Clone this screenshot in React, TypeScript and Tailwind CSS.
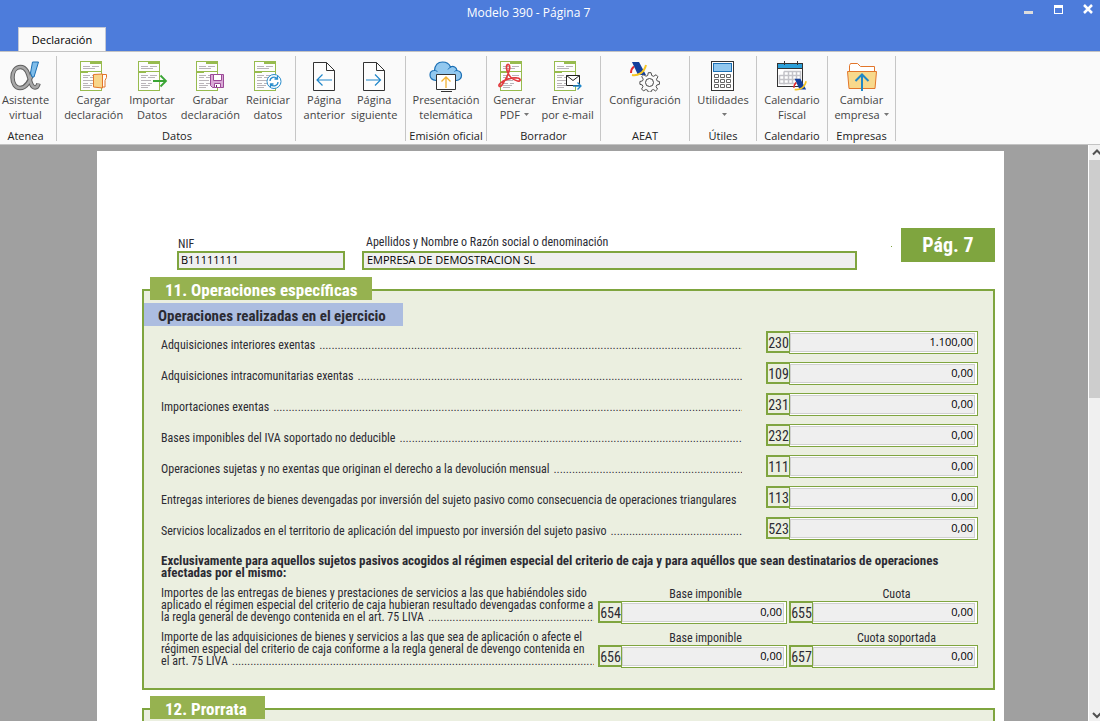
import type { ReactNode } from 'react';

type Tool = { lines: string[]; icon: ReactNode; arrow?: boolean };
type Group = { name: string; width: string; tools: Tool[] };

function Doc({ children }: { children?: ReactNode }) {
  return (
    <svg width="28" height="31" viewBox="0 0 28 31" fill="none" className="overflow-visible">
      <rect x="0.5" y="0.5" width="21" height="29" fill="#fdfdfd" stroke="#97bb4e" />
      <path d="M10 0h12v3H10zM0 10h22v1H0zM0 10h8v2H0z" fill="#97bb4e" />
      <path d="M3 5.5h7M12 5.5h7M3 7.5h12M3 14.5h7M12 14.5h7M3 16.5h5M10 16.5h7M3 19.5h10M3 22.5h5M10 22.5h4M3 24.5h9M3 26.5h7" stroke="#b9b4b9" />
      {children}
    </svg>
  );
}

function AlphaIcon() {
  const curve = 'M28.500 22.500c-1 5-5.500 5.500-7.500 0C19 17 18 6 10.500 6 5.500 6 2.500 10.500 2.500 16.500s3 10.500 7.500 10.500c7 0 10-7.500 12.500-15.500';
  return (
    <svg width="32" height="31" viewBox="0 0 32 31" fill="none" className="overflow-visible">
      <path d={curve} stroke="#606060" strokeWidth="4.500" />
      <path d={curve} stroke="#a8a8a8" strokeWidth="2.500" />
      <path d="M22.500 1h6l-4.500 15h-2l-1.500-4z" fill="#7fbdea" stroke="#1d70b4" />
    </svg>
  );
}

const loadIcon = (
  <Doc>
    <path d="M22 13.500h4.500v3l-1.500 3v6.500h-3" fill="#fdfdfd" stroke="#e2762b" />
    <path d="M13.500 13.500l9-.5v14l-9-1z" fill="#f8d58a" stroke="#e2762b" />
  </Doc>
);

const importIcon = (
  <Doc>
    <path d="M15 20h12.500M22.500 14.500l5.500 5.500-5.500 5.500" stroke="#3aa535" strokeWidth="1.800" />
  </Doc>
);

const saveIcon = (
  <Doc>
    <path d="M14.500 13.500h13v13h-11l-2-2z" fill="#d9a9d6" stroke="#9b4a97" />
    <path d="M17.500 13.500h8v6h-8zM18.500 22.500h6v4h-6z" fill="#fff" stroke="#9b4a97" />
    <path d="M20 24h1v2h-1z" fill="#5b2a58" />
  </Doc>
);

const resetIcon = (
  <Doc>
    <circle cx="20" cy="20.500" r="7" fill="#fff" stroke="#2a8dcc" />
    <path d="M16 20a4 4 0 0 1 7-2.500M24 21a4 4 0 0 1-7 2.500M23.500 15v3h-3M16.500 26v-3h3" stroke="#2a8dcc" strokeWidth="1.300" />
  </Doc>
);

function PageIcon({ back }: { back?: boolean }) {
  return (
    <svg width="24" height="31" viewBox="0 0 24 31" fill="none">
      <path d="M1.500 1.500h13l8 8v20h-21z" fill="#fdfdfd" stroke="#333" />
      <path d="M14.500 1.500v8h8" stroke="#333" />
      <path d={back ? 'M5 19h15M10.500 13.500L5 19l5.500 5.500' : 'M4 19h14.500M13 13.500l5.500 5.500-5.500 5.500'} stroke="#1f86c9" strokeWidth="1.200" />
    </svg>
  );
}

const cloudIcon = (
  <svg width="34" height="32" viewBox="0 0 34 32" fill="none">
    <path d="M7 19.500C3 19 1 17 1 14c0-3 2-4.500 4.500-4.500C6 4 9 1 13.500 1c4.500 0 7 2.500 8 5 3-1.500 6 .5 6.500 3.500 3 .5 4.500 2.500 4.500 5s-2 5-5 5z" fill="#92c8ef" stroke="#1c70b5" strokeWidth="1.200" />
    <path d="M22 6c-1.500.500-2.500 1.500-3 2.500M28 9.500c-1 0-2 .3-2.500 1M5.500 9.500c1.500 0 2.500.5 3 1.500" stroke="#1c70b5" />
    <path d="M7.500 13.500h19v15h-19zM12 30.500h11" fill="#fff" stroke="#333" />
    <path d="M17 27V16M12.500 20.500L17 16l4.500 4.500" stroke="#f2b233" strokeWidth="1.300" />
  </svg>
);

const pdfIcon = (
  <Doc>
    <path d="M8.500 3.500c-2-.5-2.500 2.500-1.500 6 1.500 5.500 6 9.500 10.500 10.500 3.500.7 3.500-2.500 0-3C11 16.300 3.500 19 0 22.500c-2.500 2.500 0 4.500 2 1.500C5 20 8.500 13 9.500 8c.5-2.500.3-4-1-4.500z" stroke="#e23b3f" strokeWidth="1.700" />
  </Doc>
);

const mailIcon = (
  <Doc>
    <path d="M12.500 14.500h13v10h-13z" fill="#fff" stroke="#222" />
    <path d="M12.500 14.500l6.500 5 6.500-5" stroke="#222" />
    <path d="M19 25h8M23.500 21.500l3.500 3.500-3.500 3.500" stroke="#1f86c9" strokeWidth="1.300" />
  </Doc>
);

function AgencyMark() {
  return (
    <>
      <path d="M2 1h7l7 13H8z" fill="#123f9c" />
      <path d="M1 12c0-3 1-5 3-6.500" stroke="#e02a2f" strokeWidth="2" />
      <path d="M2 14c6 1 12-2 14-10" stroke="#f6c623" strokeWidth="2" />
    </>
  );
}

const configIcon = (
  <svg width="30" height="31" viewBox="0 0 30 31" fill="none">
    <AgencyMark />
    <path d="M17.500 11.500h3l.7 3 2 .9 2.700-1.700 2 2.200-1.600 2.600.8 1.900 2.400.6v3l-2.800.7-.8 1.900 1.600 2.500-2.100 2-2.500-1.500-1.900.8-.6 2h-2.900l-.7-2-1.900-.8-2.600 1.500-2-2.100 1.500-2.500-.8-1.900-2.500-.6v-3l2.800-.7.8-1.900-1.600-2.600 2.100-2.100 2.500 1.600 1.800-.8z" fill="#fafafa" stroke="#444" transform="translate(2 1) scale(.93)" />
    <circle cx="19.500" cy="21.500" r="4" stroke="#444" />
  </svg>
);

const calcIcon = (
  <svg width="24" height="31" viewBox="0 0 24 31" fill="none">
    <rect x="0.500" y="0.500" width="22" height="29" fill="#fff" stroke="#333" />
    <rect x="2.500" y="2.500" width="18" height="8" fill="#92c8ef" stroke="#1c70b5" />
    <path d="M3.500 13.500h4v3h-4zM9.500 13.500h4v3h-4zM15.500 13.500h4v3h-4zM3.500 18.500h4v3h-4zM9.500 18.500h4v3h-4zM15.500 18.500h4v3h-4zM3.500 23.500h4v3h-4zM9.500 23.500h4v3h-4zM15.500 23.500h4v3h-4z" stroke="#666" />
  </svg>
);

const calendarIcon = (
  <svg width="30" height="31" viewBox="0 0 30 31" fill="none">
    <rect x="0.500" y="2.500" width="25" height="23" fill="#fff" stroke="#333" />
    <path d="M1 3h24v4H1z" fill="#2a9fd8" />
    <path d="M1 7.500h24M7.500 0v4M20.500 0v4" stroke="#333" />
    <path d="M7 10.500h16.500v9M7 10.500v13M2.500 14.500h21M2.500 18.500h21M2.500 22.500h15M2.500 14v9M11.500 10.500v12.500M15.500 10.500v12.500M19.500 10.500v9" stroke="#c3c3c8" strokeWidth="1.500" />
    <g transform="translate(16 17) scale(.82)">
      <AgencyMark />
    </g>
  </svg>
);

const companyIcon = (
  <svg width="30" height="31" viewBox="0 0 30 31" fill="none">
    <path d="M2.500 11V4.500l1-2h7l3 3h14V11" fill="#fff" stroke="#e2762b" />
    <path d="M.500 10.500h29l-1.500 17H2z" fill="#f8d98c" stroke="#e2762b" />
    <path d="M15 30V14M8.500 20L15 13.500l6.500 6.500" stroke="#2188c6" strokeWidth="2" />
  </svg>
);

const groups: Group[] = [
  { name: 'Atenea', width: 'w-[57px] pr-[5px]', tools: [{ lines: ['Asistente', 'virtual'], icon: <AlphaIcon /> }] },
  {
    name: 'Datos',
    width: 'w-[239px] pl-[2px]',
    tools: [
      { lines: ['Cargar', 'declaración'], icon: loadIcon },
      { lines: ['Importar', 'Datos'], icon: importIcon },
      { lines: ['Grabar', 'declaración'], icon: saveIcon },
      { lines: ['Reiniciar', 'datos'], icon: resetIcon },
    ],
  },
  {
    name: '',
    width: 'w-[110px]',
    tools: [
      { lines: ['Página', 'anterior'], icon: <PageIcon back /> },
      { lines: ['Página', 'siguiente'], icon: <PageIcon /> },
    ],
  },
  { name: 'Emisión oficial', width: 'w-[81px]', tools: [{ lines: ['Presentación', 'telemática'], icon: cloudIcon }] },
  {
    name: 'Borrador',
    width: 'w-[114px]',
    tools: [
      { lines: ['Generar', 'PDF'], icon: pdfIcon, arrow: true },
      { lines: ['Enviar', 'por e-mail'], icon: mailIcon },
    ],
  },
  { name: 'AEAT', width: 'w-[89px]', tools: [{ lines: ['Configuración', ''], icon: configIcon }] },
  { name: 'Útiles', width: 'w-[67px]', tools: [{ lines: ['Utilidades', ''], icon: calcIcon, arrow: true }] },
  { name: 'Calendario', width: 'w-[71px]', tools: [{ lines: ['Calendario', 'Fiscal'], icon: calendarIcon }] },
  { name: 'Empresas', width: 'w-[68px]', tools: [{ lines: ['Cambiar', 'empresa'], icon: companyIcon, arrow: true }] },
];

const rows = [
  { text: 'Adquisiciones interiores exentas', code: '230', value: '1.100,00', dots: true },
  { text: 'Adquisiciones intracomunitarias exentas', code: '109', value: '0,00', dots: true },
  { text: 'Importaciones exentas', code: '231', value: '0,00', dots: true },
  { text: 'Bases imponibles del IVA soportado no deducible', code: '232', value: '0,00', dots: true },
  { text: 'Operaciones sujetas y no exentas que originan el derecho a la devolución mensual', code: '111', value: '0,00', dots: true },
  { text: 'Entregas interiores de bienes devengadas por inversión del sujeto pasivo como consecuencia de operaciones triangulares', code: '113', value: '0,00', dots: false },
  { text: 'Servicios localizados en el territorio de aplicación del impuesto por inversión del sujeto pasivo', code: '523', value: '0,00', dots: true },
];

const cashRows = [
  {
    lines: [
      'Importes de las entregas de bienes y prestaciones de servicios a las que habiéndoles sido',
      'aplicado el régimen especial del criterio de caja hubieran resultado devengadas conforme a',
    ],
    last: 'la regla general de devengo contenida en el art. 75 LIVA',
    fields: [
      { label: 'Base imponible', code: '654' },
      { label: 'Cuota', code: '655' },
    ],
  },
  {
    lines: [
      'Importe de las adquisiciones de bienes y servicios a las que sea de aplicación o afecte el',
      'régimen especial del criterio de caja conforme a la regla general de devengo contenida en',
    ],
    last: 'el art. 75 LIVA',
    fields: [
      { label: 'Base imponible', code: '656' },
      { label: 'Cuota soportada', code: '657' },
    ],
  },
];

function TitleBar() {
  return (
    <div className="flex h-[27px] text-white">
      <h1 className="flex-1 pl-11 text-center text-[12px] leading-[26px]">Modelo 390 - Página 7</h1>
      <button aria-label="Minimizar" className="flex h-5 w-[30px] justify-center pt-[11px]">
        <span className="h-[3px] w-[9px] bg-[#dcdcdc]" />
      </button>
      <button aria-label="Maximizar" className="flex h-5 w-[30px] justify-center pt-[5px]">
        <span className="h-[9px] w-[9px] border border-t-3 border-white" />
      </button>
      <button aria-label="Cerrar" className="flex h-5 w-[27px] pt-1 pl-[10px]">
        <svg width="10" height="10" viewBox="0 0 10 10" stroke="#fff" strokeWidth="2.500">
          <path d="M1 1l8 8M9 1l-8 8" />
        </svg>
      </button>
    </div>
  );
}

function Caret() {
  return (
    <svg width="5" height="3" viewBox="0 0 5 3" className="ml-1">
      <path d="M0 0h5L2.500 3z" fill="#777" />
    </svg>
  );
}

function ToolButton({ tool }: { tool: Tool }) {
  return (
    <button className="flex flex-col items-center px-[3px] text-[#444]">
      <span className="flex h-[31px] items-start">{tool.icon}</span>
      <span className="h-[15px] whitespace-nowrap">{tool.lines[0]}</span>
      <span className="flex h-[15px] items-center whitespace-nowrap">
        {tool.lines[1]}
        {tool.arrow && <Caret />}
      </span>
    </button>
  );
}

function Ribbon() {
  return (
    <div className="flex h-[94px] border-y border-[#c3c3c3] bg-[#fafafa] pt-1 text-[11px] leading-[15px]">
      {groups.map((g, i) => (
        <div key={i} className={`${g.width} flex h-[85px] shrink-0 flex-col items-center border-r border-[#c6c6c6] pt-[5px]`}>
          <div className="flex">
            {g.tools.map((t) => (
              <ToolButton key={t.lines.join(' ')} tool={t} />
            ))}
          </div>
          <div className="mt-[6px] whitespace-nowrap text-[#222]">{g.name}</div>
        </div>
      ))}
    </div>
  );
}

function Dots() {
  return (
    <span aria-hidden="true" className="ml-1 w-0 flex-1 overflow-hidden font-['Liberation_Sans',sans-serif] text-[11px] whitespace-nowrap">
      {'.'.repeat(220)}
    </span>
  );
}

function CodeField({ code, value, label }: { code: string; value: string; label: string }) {
  return (
    <div className="flex h-[23px]">
      <span className="h-[22px] w-[23px] shrink-0 border-2 border-r-0 border-[#7fa53f] text-center text-[14px] leading-[20px]">{code}</span>
      <div className="flex-1 border border-[#7fa53f] bg-white py-px pr-[2px]">
        <input
          aria-label={label}
          defaultValue={value}
          className="block h-[19px] w-full border border-[#d0d0d0] bg-[#efefef] pr-px pb-[2px] text-right font-['Open_Sans',sans-serif] text-[11px] text-black outline-none"
        />
      </div>
    </div>
  );
}

function Section({ title, width, children }: { title: string; width: string; children?: ReactNode }) {
  return (
    <section className="border-2 border-[#7fa53f] bg-[#ebefe0]">
      <h2 className={`${width} -mt-[14px] ml-[6px] h-[23px] bg-[#96b250] pl-[15px] text-[17px] leading-[26px] font-bold whitespace-nowrap text-white`}>{title}</h2>
      {children}
    </section>
  );
}

function FormPage() {
  return (
    <main className="min-w-0 flex-1 bg-white pt-[77px] pr-[9px] pl-[45px] text-[12px] text-[#2b2b33] font-['Roboto_Condensed','Liberation_Sans',sans-serif]">
      <div className="flex items-start pl-[35px]">
        <div className="w-[168px] pt-2">
          <label htmlFor="nif" className="block h-[15px] pl-px leading-[16px]">NIF</label>
          <input id="nif" defaultValue="B11111111" className="block h-[19px] w-full border-2 border-[#7fa53f] bg-[#efefef] pb-[3px] pl-[2px] font-['Open_Sans',sans-serif] text-[11px] text-black outline-none" />
        </div>
        <div className="ml-[17px] flex-1 pt-[6px]">
          <label htmlFor="nombre" className="block h-[17px] pl-1 leading-[16px]">Apellidos y Nombre o Razón social o denominación</label>
          <input id="nombre" defaultValue="EMPRESA DE DEMOSTRACION SL" className="block h-[19px] w-full border-2 border-[#7fa53f] bg-[#efefef] pb-[3px] pl-[3px] font-['Open_Sans',sans-serif] text-[11px] text-black outline-none" />
        </div>
        <span className="mt-[18px] ml-[34px] h-px w-px bg-[#7fa53f]" />
        <div className="ml-[9px] h-[34px] w-[94px] bg-[#7fa53f] text-center text-[20px] leading-[34px] font-bold text-white">Pág. 7</div>
      </div>

      <div className="mt-[19px] flex flex-col gap-[18px]">
        <Section title="11. Operaciones específicas" width="w-[222px]">
          <h3 className="mt-[3px] h-[23px] w-[259px] bg-[#acbde0] pl-[14px] text-[15px] leading-[27px] font-bold whitespace-nowrap">Operaciones realizadas en el ejercicio</h3>
          <div className="mt-[5px] flex flex-col gap-2 pr-[15px] pl-[17px]">
            {rows.map((r) => (
              <div key={r.code} className="flex h-[23px]">
                <div className="flex min-w-0 flex-1 pt-[5px] leading-[19px] whitespace-nowrap">
                  {r.text}
                  {r.dots && <Dots />}
                </div>
                <div className="ml-6 w-[212px]">
                  <CodeField code={r.code} value={r.value} label={r.text} />
                </div>
              </div>
            ))}
          </div>
          <p className="mt-[15px] pl-[17px] text-[13px] leading-[12px] font-bold">
            Exclusivamente para aquellos sujetos pasivos acogidos al régimen especial del criterio de caja y para aquéllos que sean destinatarios de operaciones
            <br />
            afectadas por el mismo:
          </p>
          <div className="mt-2 flex flex-col gap-[7px] pr-[15px] pb-5 pl-[17px]">
            {cashRows.map((r) => (
              <div key={r.last} className="flex">
                <div className="min-w-0 flex-1 leading-[12px] whitespace-nowrap">
                  {r.lines.map((l) => (
                    <div key={l}>{l}</div>
                  ))}
                  <div className="flex">
                    {r.last}
                    <Dots />
                  </div>
                </div>
                <div className="ml-1 flex gap-[2px]">
                  {r.fields.map((f) => (
                    <div key={f.code} className="w-[189px]">
                      <div className="h-[14px] pl-[26px] text-center leading-[15px]">{f.label}</div>
                      <CodeField code={f.code} value="0,00" label={f.label} />
                    </div>
                  ))}
                </div>
              </div>
            ))}
          </div>
        </Section>
        <Section title="12. Prorrata" width="w-[115px]">
          <div className="h-40" />
        </Section>
      </div>
    </main>
  );
}

function ScrollBar() {
  return (
    <div className="flex w-3 shrink-0 flex-col overflow-hidden border-l border-white bg-[#f0f0f0]">
      <svg width="17" height="15" viewBox="0 0 17 15" fill="none" stroke="#505050" strokeWidth="2" className="shrink-0">
        <path d="M4 9.500L8 5.500l4 4" />
      </svg>
      <div className="h-[238px] bg-[#cdcdcd]" />
      <svg width="17" height="15" viewBox="0 0 17 15" fill="none" stroke="#505050" strokeWidth="2" className="mt-auto shrink-0">
        <path d="M4 7l4 4 4-4" />
      </svg>
    </div>
  );
}

export default function App() {
  return (
    <div className="flex h-screen flex-col bg-[#4d7cdb] font-['Open_Sans',sans-serif]">
      <TitleBar />
      <div className="flex h-6 pl-[18px]">
        <button className="h-[25px] w-[88px] border border-b-0 border-[#c3c8d6] bg-[#fafafa] text-[11px] text-black">Declaración</button>
      </div>
      <Ribbon />
      <div className="flex min-h-0 flex-1 overflow-hidden bg-[#a0a0a0]">
        <div className="flex min-w-0 flex-1 pt-[6px] pr-[84px] pl-[97px]">
          <FormPage />
        </div>
        <ScrollBar />
      </div>
    </div>
  );
}
